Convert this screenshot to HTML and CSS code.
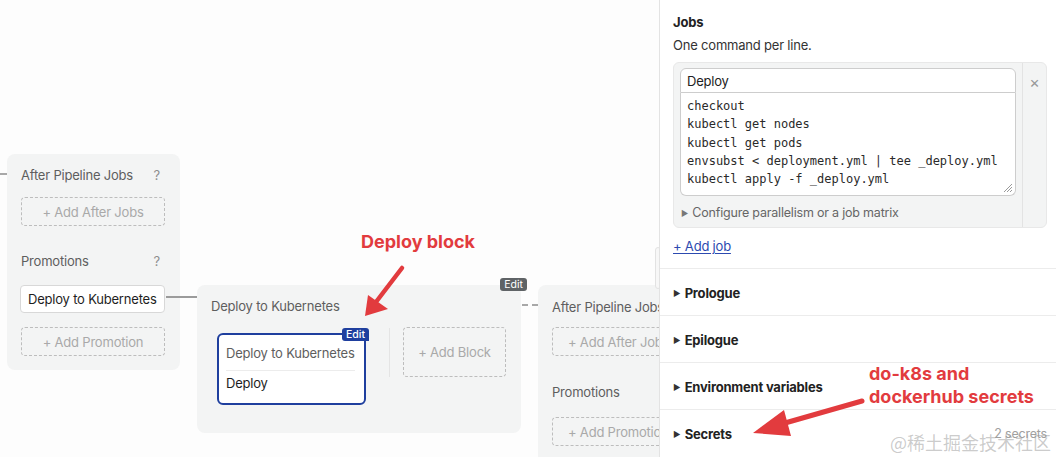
FILE: index.html
```html
<!DOCTYPE html>
<html>
<head>
<meta charset="utf-8">
<link rel="stylesheet" href="styles.css">
</head>
<body>
<div class="canvas">
  <div class="dots dots-left"></div>
  <div class="stage stage-a">
    <div class="stage-title"><span>After Pipeline Jobs</span><span class="help">?</span></div>
    <div class="dashed dashed-a1">+ Add After Jobs</div>
    <div class="stage-title promo-title"><span>Promotions</span><span class="help">?</span></div>
    <div class="promo-item">Deploy to Kubernetes</div>
    <div class="dashed dashed-a2">+ Add Promotion</div>
  </div>
  <div class="link-solid"></div>
  <div class="stage stage-b">
    <span class="badge badge-grey">Edit</span>
    <div class="stage-title">Deploy to Kubernetes</div>
    <div class="block-row">
      <div class="block-card">
        <span class="badge badge-blue">Edit</span>
        <div class="block-name">Deploy to Kubernetes</div>
        <div class="block-job">Deploy</div>
      </div>
      <div class="block-sep"></div>
      <div class="dashed add-block">+ Add Block</div>
    </div>
  </div>
  <div class="dots dots-mid"></div>
  <div class="stage stage-c">
    <div class="stage-title"><span>After Pipeline Jobs</span></div>
    <div class="dashed dashed-c1">+ Add After Jobs</div>
    <div class="stage-title promo-title-c"><span>Promotions</span></div>
    <div class="dashed dashed-c2">+ Add Promotion</div>
  </div>
  <div class="scroll-thumb"></div>
</div>

<div class="panel">
  <div class="jobs">
    <div class="h-jobs">Jobs</div>
    <div class="desc">One command per line.</div>
    <div class="jobbox">
      <div class="jobmain">
        <div class="job-name">Deploy</div>
        <div class="job-cmds"><pre>checkout
kubectl get nodes
kubectl get pods
envsubst &lt; deployment.yml | tee _deploy.yml
kubectl apply -f _deploy.yml</pre>
          <svg class="grip" width="12" height="12" viewBox="0 0 12 12"><path d="M11 3 L3 11 M11 6 L6 11 M11 9 L9 11" stroke="#9a9a9a" stroke-width="1" fill="none"/></svg>
        </div>
        <div class="configure"><span class="tri tri-sm">&#9654;</span>Configure parallelism or a job matrix</div>
      </div>
      <div class="jobside"><span class="close">&times;</span></div>
    </div>
    <a class="addjob">+ Add job</a>
  </div>
  <div class="section"><span class="tri">&#9654;</span>Prologue</div>
  <div class="section"><span class="tri">&#9654;</span>Epilogue</div>
  <div class="section"><span class="tri">&#9654;</span>Environment variables</div>
  <div class="section section-last"><span class="sec-left"><span class="tri">&#9654;</span>Secrets</span><span class="count">2 secrets</span></div>
</div>

<div class="overlay">
  <div class="note note-deploy">Deploy block</div>
  <div class="note note-secrets">do-k8s and<br>dockerhub secrets</div>
  <svg class="arrows" width="1056" height="457" viewBox="0 0 1056 457">
    <line x1="402" y1="268" x2="376" y2="302" stroke="#e23b3e" stroke-width="4.5" stroke-linecap="round"/>
    <polygon points="365,316 368,295 388,309" fill="#e23b3e"/>
    <line x1="862" y1="401" x2="785" y2="423" stroke="#e23b3e" stroke-width="5" stroke-linecap="round"/>
    <polygon points="753,433 784,410 791,436" fill="#e23b3e"/>
  </svg>
  <div class="watermark">@稀土掘金技术社区</div>
</div>
</body>
</html>
```
FILE: styles.css
```css
* { box-sizing: border-box; margin: 0; padding: 0; }
html, body { width: 1056px; height: 457px; overflow: hidden; }
body {
  font-family: Inter, "Noto Sans", sans-serif;
  font-size: 13px;
  color: #222;
  background: #fdfdfd;
  display: flex;
  position: relative;
  letter-spacing: -0.2px;
}

/* ---------- canvas ---------- */
.canvas {
  width: 659px;
  height: 457px;
  flex: none;
  position: relative;
  overflow: hidden;
  background: #fdfdfd;
}
.stage {
  position: absolute;
  background: #f3f4f4;
  border-radius: 8px;
  padding: 12px 15px 13px 14px;
}
.stage-a { left: 7px; top: 154px; width: 173px; height: 216px; }
.stage-b { left: 197px; top: 285px; width: 324px; height: 148px; padding: 12px 14px 0 14px; }
.stage-c { left: 538px; top: 285px; width: 175px; height: 180px; padding-top: 13px; }

.stage-title {
  display: flex;
  justify-content: space-between;
  line-height: 18px;
  color: #5e5e5e;
}
.help { color: #8e8e8e; padding-right: 5px; }
.promo-title { margin-top: 26px; }
.promo-title-c { margin-top: 27px; }

.dashed {
  border: 1px dashed #bdbdbd;
  border-radius: 4px;
  height: 29px;
  display: flex;
  align-items: center;
  justify-content: center;
  color: #a9a9a9;
  white-space: nowrap;
}
.dashed-a1 { margin-top: 13px; }
.dashed-a2 { margin-top: 14px; }
.dashed-c1 { margin-top: 11px; width: 146px; justify-content: flex-start; padding-left: 15px; }
.dashed-c2 { margin-top: 16px; width: 146px; justify-content: flex-start; padding-left: 15px; }

.promo-item {
  margin-top: 15px;
  margin-left: -1px;
  height: 28px;
  background: #fff;
  border: 1px solid #d8d8d8;
  border-radius: 4px;
  padding-left: 7px;
  line-height: 26px;
  color: #1e1e1e;
  white-space: nowrap;
}

.badge {
  position: absolute;
  font-size: 10.5px;
  line-height: 13px;
  height: 13px;
  padding: 0 4px;
  border-radius: 3px;
  color: #fff;
  letter-spacing: 0;
}
.badge-grey { background: #5f6366; top: -7px; right: -6px; }
.badge-blue { background: #1f3f9e; top: -7px; right: -5px; border-radius: 3px 3px 0 3px; font-weight: 500; }

.block-row {
  display: flex;
  align-items: flex-start;
  margin-top: 12px;
  padding-left: 6px;
}
.block-card {
  position: relative;
  margin-top: 6px;
  width: 149px;
  height: 72px;
  border: 2px solid #1f3f9e;
  border-radius: 6px;
  background: #fff;
  padding: 9px 9px 0 7px;
}
.block-name {
  line-height: 18px;
  color: #5e5e5e;
  white-space: nowrap;
  padding-bottom: 8px;
  border-bottom: 1px solid #ececec;
}
.block-job { line-height: 18px; margin-top: 3px; color: #1e1e1e; }
.block-sep {
  width: 1px;
  height: 49px;
  margin: 1px 13px 0 23px;
  background: #e4e4e4;
}
.add-block { width: 103px; height: 50px; }

.link-solid {
  position: absolute;
  left: 166px;
  top: 296px;
  width: 31px;
  height: 2px;
  background: #9b9b9b;
}
.dots {
  position: absolute;
  height: 0;
  border-top: 2px dashed #a8a8a8;
}
.dots-left { left: -1px; top: 173px; width: 8px; }
.dots-mid { left: 522px; top: 304px; width: 16px; }
.scroll-thumb {
  position: absolute;
  left: 655px;
  top: 247px;
  width: 6px;
  height: 42px;
  border: 1px solid #e2e2e2;
  border-radius: 3px;
  background: #f7f7f7;
}

/* ---------- panel ---------- */
.panel {
  flex: 1;
  height: 457px;
  background: #fff;
  border-left: 1px solid #e3e3e3;
  padding-top: 13px;
  position: relative;
}
.jobs { padding: 0 9px 0 13px; }
.h-jobs { font-weight: 700; line-height: 18px; color: #222; }
.desc { margin-top: 5px; line-height: 18px; color: #333; }
.jobbox {
  margin-top: 8px;
  height: 166px;
  background: #f3f4f4;
  border: 1px solid #e8e8e8;
  border-radius: 6px;
  display: flex;
}
.jobmain {
  flex: 1;
  padding: 5px 6px 0 6px;
  border-right: 1px solid #e3e3e3;
}
.jobside {
  width: 23px;
  display: flex;
  justify-content: center;
  padding-top: 10px;
}
.close { color: #999; font-size: 16px; line-height: 18px; }
.job-name {
  height: 25px;
  background: #fff;
  border: 1px solid #cdcdcd;
  border-radius: 6px 6px 0 0;
  padding: 0 6px;
  line-height: 25px;
  color: #222;
}
.job-cmds {
  position: relative;
  height: 103px;
  background: #fff;
  border: 1px solid #cdcdcd;
  border-top: 0;
  border-radius: 0 0 6px 6px;
  padding: 4px 6px 0;
}
.job-cmds pre {
  font-family: "DejaVu Sans Mono", "Liberation Mono", monospace;
  font-size: 12px;
  line-height: 18.25px;
  color: #2a2a2a;
  letter-spacing: 0;
}
.grip { position: absolute; right: 2px; bottom: 2px; }
.configure {
  margin-top: 9px;
  line-height: 16px;
  font-size: 12.5px;
  color: #666;
  display: flex;
  align-items: center;
  white-space: nowrap;
}
.tri { font-size: 8px; margin-right: 4px; color: #333; letter-spacing: 0; }
.tri-sm { color: #777; margin-left: 1px; margin-right: 4px; }
.addjob {
  display: block;
  margin-top: 10px;
  line-height: 16px;
  color: #2c4ab0;
  text-decoration: underline;
  text-underline-offset: 2px;
}
.section {
  border-top: 1px solid #ececec;
  padding: 15px 13px 13px 13px;
  line-height: 18px;
  font-weight: 700;
  color: #222;
  display: flex;
  align-items: center;
}
.jobs + .section { margin-top: 14px; }
.section-last { justify-content: space-between; }
.sec-left { display: flex; align-items: center; }
.count { font-weight: 400; color: #a0a0a0; font-size: 12.5px; margin-right: -4px; }

/* ---------- overlay ---------- */
.overlay {
  position: absolute;
  inset: 0;
  pointer-events: none;
}
.arrows { position: absolute; left: 0; top: 0; }
.note {
  position: absolute;
  color: #e23b3e;
  font-weight: 700;
  font-size: 18px;
  line-height: 23px;
  letter-spacing: 0;
}
.note-deploy { left: 361px; top: 230px; }
.note-secrets { left: 869px; top: 362px; }
.watermark {
  position: absolute;
  left: 890px;
  top: 430px;
  font-family: "Noto Sans CJK SC", sans-serif;
  font-size: 18px;
  line-height: 24px;
  color: rgba(140, 140, 140, 0.45);
  letter-spacing: 0;
}
```
